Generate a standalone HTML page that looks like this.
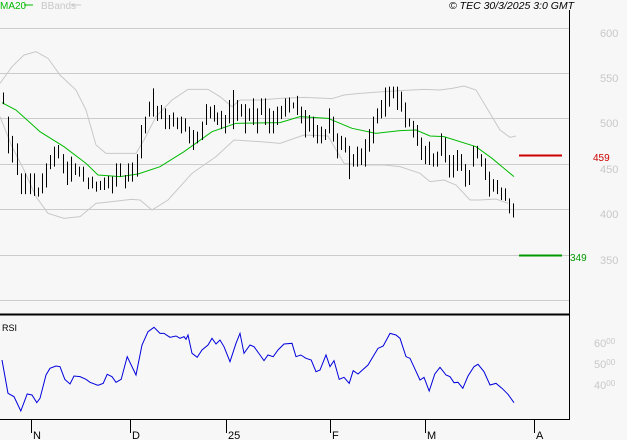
<!DOCTYPE html>
<html><head><meta charset="utf-8"><style>
html,body{margin:0;padding:0;background:#f7f7f7;}
body{width:627px;height:440px;overflow:hidden;font-family:"Liberation Sans",sans-serif;}
</style></head><body>
<svg width="627" height="440" viewBox="0 0 627 440" xmlns="http://www.w3.org/2000/svg" style="display:block">
<rect width="627" height="440" fill="#f7f7f7"/>
<g stroke="#cccccc" stroke-width="1">
<line x1="0" y1="28.5" x2="569" y2="28.5"/>
<line x1="0" y1="73.5" x2="569" y2="73.5"/>
<line x1="0" y1="118.5" x2="569" y2="118.5"/>
<line x1="0" y1="164.5" x2="569" y2="164.5"/>
<line x1="0" y1="209.5" x2="569" y2="209.5"/>
<line x1="0" y1="255.5" x2="569" y2="255.5"/>
<line x1="0" y1="300.5" x2="569" y2="300.5"/>
</g>
<g transform="scale(0.4,0.33333)" fill="none">
<polyline stroke="#c8c8c8" vector-effect="non-scaling-stroke" stroke-width="1" points="0,250 30,200 60,165 90,155 120,175 150,225 190,270 215,330 240,435 265,460 340,460 360,420 390,350 430,300 470,268 520,268 550,290 580,320 600,300 650,300 700,295 760,292 830,296 860,285 900,280 960,275 1000,272 1060,268 1100,270 1130,265 1160,258 1190,270 1220,330 1250,390 1275,412 1290,408"/>
<polyline stroke="#c8c8c8" vector-effect="non-scaling-stroke" stroke-width="1" points="0,350 30,440 60,510 90,590 120,640 160,655 200,650 240,610 280,605 330,598 350,600 380,630 420,600 480,520 540,470 585,420 650,425 700,430 760,405 820,408 860,490 900,495 960,495 1000,500 1050,520 1075,545 1110,540 1140,555 1175,600 1200,600 1240,597 1270,610"/>
<polyline stroke="#00bb00" vector-effect="non-scaling-stroke" stroke-width="1" points="5,308 40,330 100,395 160,440 215,490 245,525 300,530 345,522 400,500 460,455 530,395 590,370 700,368 750,350 820,355 880,385 940,400 1000,392 1040,390 1075,408 1110,410 1190,440 1230,475 1285,530"/>
</g>
<g transform="translate(0.5,0) scale(1,0.8333)">
<path fill="none" stroke="#000" stroke-width="1" vector-effect="non-scaling-stroke" d="M3 111V125M8 140V184M12 163V195M17 172V210M21 208V233M25 208V233M30 208V233M34 208V235M38 225V236M42 208V232M46 196V225M50 186V203M54 176V200M58 174V190M63 185V208M67 194V222M71 188V218M75 196V210M79 200V212M83 200V218M88 213V227M92 212V226M96 218V230M100 217V228M104 213V228M108 211V226M112 212V232M116 196V224M120 196V212M125 210V226M128 196V218M132 195V218M137 185V212M141 150V190M145 140V160M149 122V140M153 106V140M157 127V145M161 126V143M165 130V155M169 138V155M173 135V152M177 141V155M181 140V160M185 142V158M189 152V172M193 156V180M197 158V172M202 146V168M206 125V150M210 128V142M214 126V146M217 135V150M221 133V155M225 138V160M229 120V148M233 108V155M237 120V145M241 125V140M245 125V160M249 130V145M253 118V150M257 130V160M261 118V138M265 118V150M269 130V160M273 133V160M277 128V150M281 127V143M285 118V140M289 117V135M293 123V130M297 115V138M301 128V148M305 132V165M309 138V158M313 140V165M317 150V172M321 152V172M325 155V168M329 130V160M333 140V170M337 160V190M341 163V180M345 165V183M349 175V215M353 185V200M357 176V200M361 178V198M365 167V200M369 155V182M373 140V172M377 130V148M381 120V142M385 105V140M389 104V128M393 104V118M397 104V132M401 110V134M405 123V153M409 142V152M413 145V165M417 150V175M421 165V192M425 175V197M429 170V198M433 184V200M437 182V200M441 160V187M445 165V195M449 186V213M453 186V213M457 180V205M461 185V205M465 197V224M469 204V222M473 175V200M477 175V190M481 185V200M485 190V216M489 206V236M493 215V230M497 216V233M501 225V240M505 226V241M509 238V256M513 244V261"/>
</g>
<line x1="569.5" y1="10" x2="569.5" y2="419" stroke="#000" stroke-width="1"/>
<line x1="0" y1="314.5" x2="569" y2="314.5" stroke="#000" stroke-width="2"/>
<line x1="0" y1="419.5" x2="570" y2="419.5" stroke="#000" stroke-width="1"/>
<g transform="translate(0,220) scale(0.4,0.33333)">
<polyline fill="none" stroke="#0000dd" stroke-width="1" vector-effect="non-scaling-stroke" points="5,420 20,520 35,530 52,573 68,522 80,525 92,548 100,535 115,465 125,445 140,438 150,440 162,478 175,492 185,468 200,470 215,478 225,487 245,496 258,490 268,463 280,470 290,487 303,478 318,410 340,465 355,375 370,335 385,322 400,340 410,340 425,352 440,348 450,355 460,350 465,358 470,345 480,400 493,412 505,390 520,375 530,355 540,372 550,360 560,380 575,425 590,370 600,340 610,400 625,375 635,380 650,405 660,422 670,405 683,410 695,390 710,372 730,370 740,410 752,405 765,415 778,420 790,455 800,450 815,405 825,440 835,422 848,478 860,472 873,490 883,452 895,462 920,435 935,405 945,385 958,378 975,340 990,345 1000,355 1015,410 1025,415 1050,480 1060,472 1073,513 1087,462 1100,442 1115,465 1125,470 1135,488 1145,487 1157,505 1170,468 1185,440 1195,433 1210,455 1225,495 1240,490 1255,505 1270,523 1285,548"/>
</g>
<g stroke="#000" stroke-width="1">
<line x1="31.5" y1="419" x2="31.5" y2="433"/>
<line x1="130.5" y1="419" x2="130.5" y2="433"/>
<line x1="226.5" y1="419" x2="226.5" y2="433"/>
<line x1="330.5" y1="419" x2="330.5" y2="433"/>
<line x1="425.5" y1="419" x2="425.5" y2="433"/>
<line x1="534.5" y1="419" x2="534.5" y2="433"/>
</g>
<g font-size="11" fill="#000" font-family="Liberation Sans,sans-serif">
<text x="33" y="439">N</text><text x="132" y="439">D</text><text x="228" y="439">25</text>
<text x="332" y="439">F</text><text x="427" y="439">M</text><text x="536" y="439">A</text>
</g>
<line x1="519" y1="155.5" x2="562" y2="155.5" stroke="#cc0000" stroke-width="2"/>
<line x1="519" y1="255.5" x2="562" y2="255.5" stroke="#009900" stroke-width="2"/>
<text x="593" y="161" font-size="10" fill="#cc0000">459</text>
<text x="570" y="261" font-size="10" fill="#009900">349</text>
<g font-size="11" fill="#c8c8c8">
<text x="600" y="37">600</text><text x="600" y="82">550</text><text x="600" y="127">500</text>
<text x="600" y="173">450</text><text x="600" y="218">400</text><text x="600" y="264">350</text>
<text x="594" y="347">60<tspan font-size="8" dy="-3">00</tspan></text>
<text x="594" y="368">50<tspan font-size="8" dy="-3">00</tspan></text>
<text x="594" y="389">40<tspan font-size="8" dy="-3">00</tspan></text>
</g>
<text x="2" y="331" font-size="9" fill="#000">RSI</text>
<text x="0" y="9" font-size="10" fill="#00bb00">MA20</text>
<line x1="24" y1="5" x2="33" y2="5" stroke="#00bb00" stroke-width="1"/>
<text x="41" y="9" font-size="10" fill="#c8c8c8">BBands</text>
<line x1="71" y1="5" x2="81" y2="5" stroke="#c8c8c8" stroke-width="1"/>
<text x="449" y="9" font-size="10.5" font-style="italic" fill="#000">© TEC 30/3/2025 3:0 GMT</text>
</svg>
</body></html>
